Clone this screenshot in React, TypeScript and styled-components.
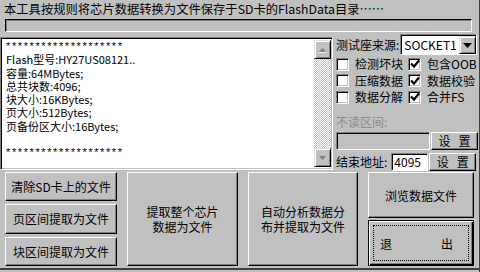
import React from 'react';
import styled, { createGlobalStyle } from 'styled-components';

const GlobalStyle = createGlobalStyle`
  html, body {
    margin: 0;
    padding: 0;
    background: #c0c0c0;
  }
  * {
    box-sizing: border-box;
  }
`;

const FONT = `"Noto Sans CJK SC", "Liberation Sans", sans-serif`;

const Window = styled.div`
  width: 480px;
  height: 272px;
  overflow: hidden;
  background: #c0c0c0;
  font-family: ${FONT};
  font-size: 12px;
  color: #000;
  display: flex;
  flex-direction: column;
  border-right: 1px solid #404040;
`;

const Title = styled.div`
  height: 19px;
  line-height: 18px;
  padding-left: 4px;
  font-size: 12.3px;
  white-space: nowrap;
`;

const Progress = styled.div`
  height: 13px;
  margin: 0 7px 0 5px;
  border-top: 1px solid #000;
  border-left: 1px solid #000;
  border-bottom: 1px solid #fff;
  border-right: 1px solid #fff;
  box-shadow: inset 1px 1px 0 #808080;
`;

const Middle = styled.div`
  display: flex;
  align-items: flex-start;
  margin-top: 2px;
  height: 138px;
`;

const LogBox = styled.div`
  display: flex;
  width: 333px;
  height: 133px;
  margin-top: 3px;
  background: #fff;
  border-top: 1px solid #808080;
  border-left: 1px solid #808080;
  border-right: 1px solid #fff;
  border-bottom: 1px solid #fff;
  box-shadow: inset 1px 1px 0 #000, inset -1px -1px 0 #c0c0c0;
  padding: 2px 1px 2px 2px;
`;

const LogText = styled.div`
  flex: 1;
  padding: 0 0 0 3px;
  font-size: 11px;
  line-height: 13.3px;
  white-space: pre;
  overflow: hidden;
`;

const Line = styled.div`
  height: 13.3px;
`;

const Stars = styled.div`
  height: 13.3px;
  letter-spacing: 1.6px;
  font-family: "Liberation Sans", sans-serif;
  font-size: 11px;
`;

const ScrollBar = styled.div`
  width: 17px;
  display: flex;
  flex-direction: column;
  background: repeating-conic-gradient(#c0c0c0 0 25%, #fff 0 50%) 0 0 / 2px 2px;
`;

const ScrollButton = styled.div`
  height: 19px;
  display: flex;
  align-items: center;
  justify-content: center;
  background: #c0c0c0;
  border-top: 1px solid #dfdfdf;
  border-left: 1px solid #dfdfdf;
  border-right: 1px solid #000;
  border-bottom: 1px solid #000;
  box-shadow: inset 1px 1px 0 #fff, inset -1px -1px 0 #808080;
`;

const Track = styled.div`
  flex: 1;
`;

const Side = styled.div`
  width: 142px;
  margin-left: 3px;
  display: flex;
  flex-direction: column;
`;

const SourceRow = styled.div`
  display: flex;
  align-items: center;
  height: 21px;
`;

const Label = styled.span<{ $disabled?: boolean }>`
  white-space: nowrap;
  color: ${(p) => (p.$disabled ? '#8c8c8c' : '#000')};
  font-size: 12px;
  line-height: 14px;
`;

const Select = styled.div`
  margin-left: 1px;
  width: 77px;
  height: 21px;
  display: flex;
  background: #fff;
  border-top: 1px solid #808080;
  border-left: 1px solid #808080;
  border-right: 1px solid #fff;
  border-bottom: 1px solid #fff;
  box-shadow: inset 1px 1px 0 #000;
`;

const SelectValue = styled.div`
  flex: 1;
  padding: 1px 0 0 3px;
  line-height: 18px;
  font-size: 12px;
`;

const DropButton = styled.div`
  width: 17px;
  margin: 1px 0 0 0;
  display: flex;
  align-items: center;
  justify-content: center;
  background: #c0c0c0;
  border-top: 1px solid #dfdfdf;
  border-left: 1px solid #dfdfdf;
  border-right: 1px solid #000;
  border-bottom: 1px solid #000;
  box-shadow: inset 1px 1px 0 #fff, inset -1px -1px 0 #808080;
`;

const Options = styled.div`
  display: grid;
  grid-template-columns: 72px 70px;
  grid-template-rows: repeat(3, 16.7px);
  margin-top: 2px;
  height: 50px;
`;

const Check = styled.div`
  display: flex;
  align-items: center;
  height: 14px;
  line-height: 14px;
  gap: 6px;
  white-space: nowrap;
`;

const Box = styled.span`
  width: 13px;
  height: 13px;
  flex: none;
  display: flex;
  align-items: center;
  justify-content: center;
  background: #fff;
  border-top: 1px solid #808080;
  border-left: 1px solid #808080;
  border-right: 1px solid #fff;
  border-bottom: 1px solid #fff;
  box-shadow: inset 1px 1px 0 #000, inset -1px -1px 0 #c0c0c0;
`;

const RangeLabel = styled.div`
  margin-top: 7px;
  height: 15px;
  display: flex;
  align-items: center;
`;

const EditRow = styled.div`
  display: flex;
  align-items: center;
  height: 19px;
  margin-top: 2px;
`;

const Edit = styled.div<{ $width: number; $disabled?: boolean }>`
  width: ${(p) => p.$width}px;
  height: 18px;
  flex: none;
  background: ${(p) => (p.$disabled ? '#c0c0c0' : '#fff')};
  border-top: 1px solid #808080;
  border-left: 1px solid #808080;
  border-right: 1px solid #fff;
  border-bottom: 1px solid #fff;
  box-shadow: inset 1px 1px 0 #000;
  padding: 0 0 0 2px;
  line-height: 16px;
  font-size: 12px;
`;

const AddressEdit = styled(Edit)`
  margin-left: 4px;
`;

const SmallButton = styled.div`
  margin-left: 1px;
  width: 47px;
  height: 18px;
  display: flex;
  align-items: center;
  justify-content: center;
  gap: 8px;
  background: #c0c0c0;
  border-top: 1px solid #fff;
  border-left: 1px solid #fff;
  border-right: 1px solid #000;
  border-bottom: 1px solid #000;
  box-shadow: inset -1px -1px 0 #808080;
  font-size: 12px;
`;

const Bottom = styled.div`
  display: grid;
  grid-template-columns: 112px 111px 110px 106px;
  column-gap: 10px;
  height: 94px;
  padding-left: 5px;
`;

const FrameEdge = styled.div`
  height: 2px;
  margin-top: 2px;
  background: #404040;
`;

const Stack = styled.div<{ $gap: number }>`
  display: flex;
  flex-direction: column;
  gap: ${(p) => p.$gap}px;
`;

const Button = styled.div<{ $default?: boolean }>`
  flex: 1;
  display: flex;
  align-items: center;
  justify-content: center;
  text-align: center;
  line-height: 15px;
  font-size: 12px;
  background: #c0c0c0;
  border: 1px solid;
  border-color: ${(p) => (p.$default ? '#000' : '#fff #000 #000 #fff')};
  box-shadow: ${(p) =>
    p.$default
      ? 'inset 1px 1px 0 #fff, inset -1px -1px 0 #000, inset -2px -2px 0 #808080'
      : 'inset -1px -1px 0 #808080'};
`;

const Focus = styled.div`
  flex: 1;
  align-self: stretch;
  margin: 4px;
  border: 1px dotted #000;
  display: flex;
  align-items: center;
  justify-content: space-between;
  padding: 0 15px 0 6px;
`;

const Up = () => (
  <svg width="9" height="6" viewBox="0 0 9 6">
    <polygon points="4.5,1 8,5 1,5" fill="#808080" />
    <line x1="1" y1="5.5" x2="8" y2="5.5" stroke="#fff" strokeWidth="1" />
  </svg>
);

const Down = () => (
  <svg width="9" height="6" viewBox="0 0 9 6">
    <polygon points="1,1 8,1 4.5,5" fill="#808080" />
  </svg>
);

const Arrow = () => (
  <svg width="9" height="5" viewBox="0 0 9 5">
    <polygon points="0,0 9,0 4.5,5" fill="#000" />
  </svg>
);

const Tick = () => (
  <svg width="10" height="10" viewBox="0 0 10 10">
    <polyline points="1,4.5 4,7.5 9,1.5" fill="none" stroke="#000" strokeWidth="2.2" />
  </svg>
);

const CheckItem = ({ label, checked }: { label: string; checked?: boolean }) => (
  <Check>
    <Box>{checked && <Tick />}</Box>
    {label}
  </Check>
);

const info = [
  'Flash型号:HY27US08121..',
  '容量:64MBytes;',
  '总共块数:4096;',
  '块大小:16KBytes;',
  '页大小:512Bytes;',
  '页备份区大小:16Bytes;',
];

export default function App() {
  return (
    <Window>
      <GlobalStyle />
      <Title>本工具按规则将芯片数据转换为文件保存于SD卡的FlashData目录……</Title>
      <Progress />
      <Middle>
        <LogBox>
          <LogText>
            <Stars>********************</Stars>
            {info.map((line) => (
              <Line key={line}>{line}</Line>
            ))}
            <Line>&nbsp;</Line>
            <Stars>********************</Stars>
          </LogText>
          <ScrollBar>
            <ScrollButton>
              <Up />
            </ScrollButton>
            <Track />
            <ScrollButton>
              <Down />
            </ScrollButton>
          </ScrollBar>
        </LogBox>
        <Side>
          <SourceRow>
            <Label>测试座来源:</Label>
            <Select>
              <SelectValue>SOCKET1</SelectValue>
              <DropButton>
                <Arrow />
              </DropButton>
            </Select>
          </SourceRow>
          <Options>
            <CheckItem label="检测坏块" />
            <CheckItem label="包含OOB" checked />
            <CheckItem label="压缩数据" />
            <CheckItem label="数据校验" checked />
            <CheckItem label="数据分解" />
            <CheckItem label="合并FS" checked />
          </Options>
          <RangeLabel>
            <Label $disabled>不读区间:</Label>
          </RangeLabel>
          <EditRow>
            <Edit $width={94} $disabled />
            <SmallButton>
              <span>设</span>
              <span>置</span>
            </SmallButton>
          </EditRow>
          <EditRow>
            <Label>结束地址:</Label>
            <AddressEdit $width={37}>4095</AddressEdit>
            <SmallButton>
              <span>设</span>
              <span>置</span>
            </SmallButton>
          </EditRow>
        </Side>
      </Middle>
      <Bottom>
        <Stack $gap={3}>
          <Button>清除SD卡上的文件</Button>
          <Button>页区间提取为文件</Button>
          <Button>块区间提取为文件</Button>
        </Stack>
        <Button>
          提取整个芯片
          <br />
          数据为文件
        </Button>
        <Button>
          自动分析数据分
          <br />
          布并提取为文件
        </Button>
        <Stack $gap={2}>
          <Button>浏览数据文件</Button>
          <Button $default>
            <Focus>
              <span>退</span>
              <span>出</span>
            </Focus>
          </Button>
        </Stack>
      </Bottom>
      <FrameEdge />
    </Window>
  );
}
